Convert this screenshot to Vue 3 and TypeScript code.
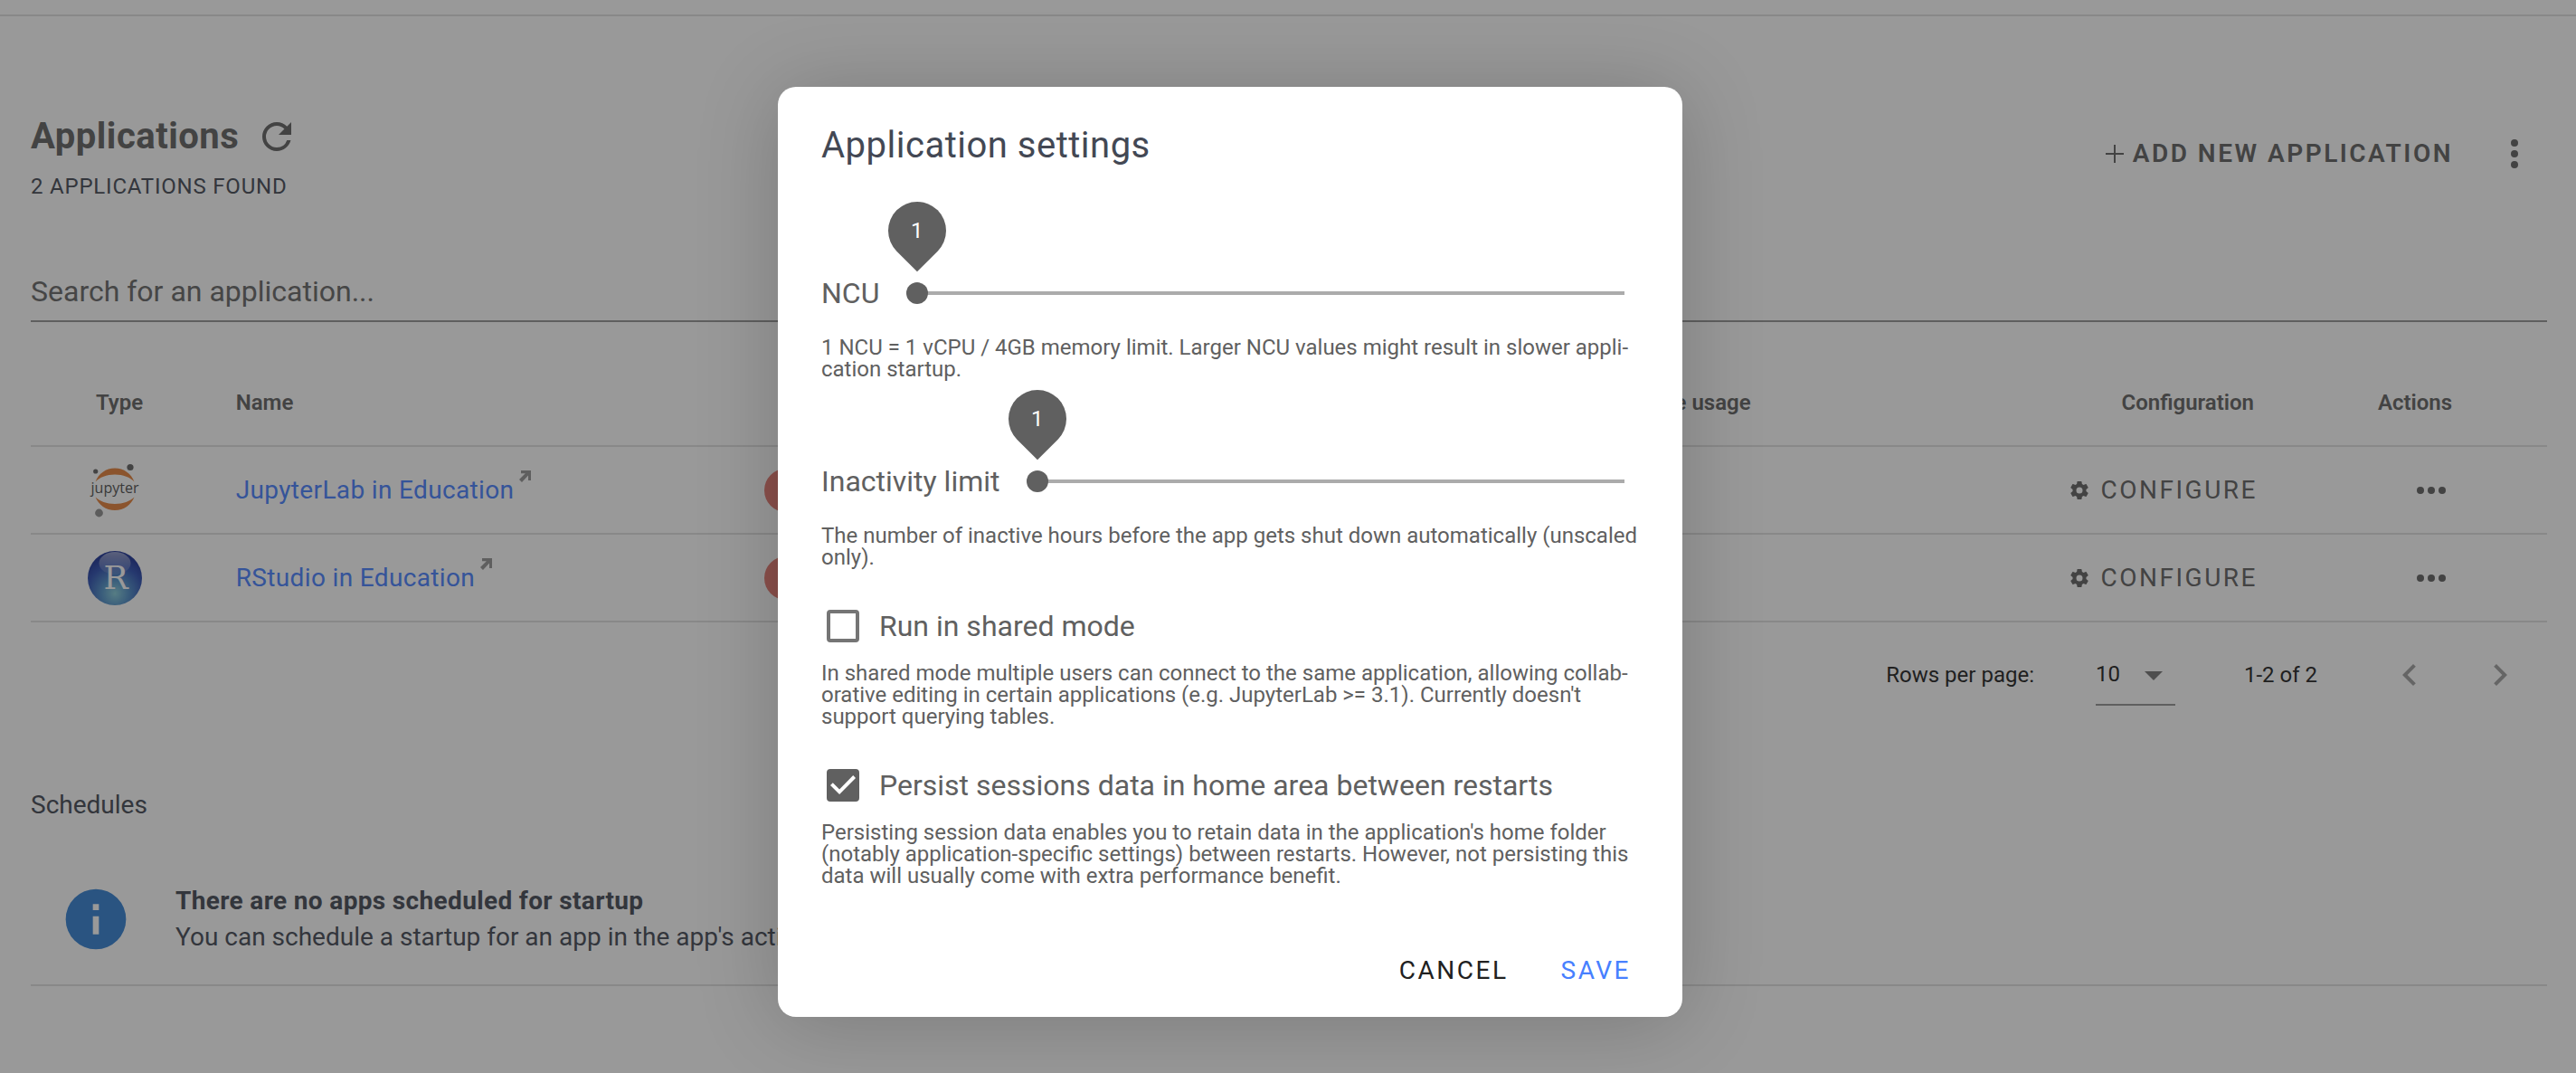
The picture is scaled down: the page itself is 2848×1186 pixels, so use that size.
<script setup lang="ts">
import { ref } from 'vue'

interface AppRow {
  id: number
  kind: 'jupyter' | 'rstudio'
  name: string
}

const apps: AppRow[] = [
  { id: 1, kind: 'jupyter', name: 'JupyterLab in Education' },
  { id: 2, kind: 'rstudio', name: 'RStudio in Education' },
]

const search = ref('')
const rowsPerPage = ref('10')
const ncu = ref(1)
const inactivity = ref(1)
const sharedMode = ref(false)
const persist = ref(true)
</script>

<template>
  <div class="app">
    <div class="topbar"></div>
    <main class="page">
      <header class="head">
        <div>
          <div class="title-row">
            <h1>Applications</h1>
            <button class="icon-btn" aria-label="Refresh">
              <svg width="48" height="48" viewBox="0 0 24 24" fill="currentColor"><path d="M17.65 6.35C16.2 4.9 14.21 4 12 4a8 8 0 0 0-8 8 8 8 0 0 0 8 8c3.73 0 6.84-2.55 7.73-6h-2.08A5.99 5.99 0 0 1 12 18a6 6 0 0 1-6-6 6 6 0 0 1 6-6c1.66 0 3.14.69 4.22 1.78L13 11h7V4l-2.35 2.35z" /></svg>
            </button>
          </div>
          <p class="count">2 APPLICATIONS FOUND</p>
        </div>
        <div class="head-actions">
          <button class="add">
            <svg width="20" height="20" viewBox="0 0 20 20" fill="none" stroke="currentColor" stroke-width="2"><path d="M10 0v20M0 10h20" /></svg>
            <span>ADD NEW APPLICATION</span>
          </button>
          <button class="icon-btn" aria-label="More">
            <svg width="48" height="48" viewBox="0 0 24 24" fill="currentColor"><circle cx="12" cy="6" r="2" /><circle cx="12" cy="12" r="2" /><circle cx="12" cy="18" r="2" /></svg>
          </button>
        </div>
      </header>

      <input v-model="search" class="search" type="text" placeholder="Search for an application..." aria-label="Search for an application" />

      <table class="apps">
        <colgroup>
          <col class="c-type" /><col class="c-name" /><col class="c-status" /><col class="c-usage" /><col class="c-config" /><col class="c-actions" />
        </colgroup>
        <thead>
          <tr>
            <th class="type">Type</th>
            <th>Name</th>
            <th class="mid">Status</th>
            <th class="end">Resource usage</th>
            <th class="end">Configuration</th>
            <th class="mid">Actions</th>
          </tr>
        </thead>
        <tbody>
          <tr v-for="a in apps" :key="a.id">
            <td class="logo">
              <svg v-if="a.kind === 'jupyter'" width="60" height="60" viewBox="0 0 60 60">
                <path d="M8.500 20.500C12 11.500 20 5.500 30 5.500s18 6 21.500 15C47 15.500 39 12.500 30 12.500S13 15.500 8.500 20.500z" fill="#e58038" />
                <path d="M8.500 37.500C12 46 20 52 30 52s18-6 21.500-14.500C47 42 39 45 30 45S13 42 8.500 37.500z" fill="#e58038" />
                <circle cx="47" cy="4.500" r="3.600" fill="#616161" />
                <circle cx="8.700" cy="9" r="2.600" fill="#616161" />
                <circle cx="12.500" cy="55" r="4.400" fill="#8f8f8f" />
                <text x="30" y="33" text-anchor="middle" class="jup">jupyter</text>
              </svg>
              <svg v-else width="60" height="60" viewBox="0 0 60 60">
                <defs>
                  <radialGradient id="ball" cx="0.5" cy="0.78" r="0.7">
                    <stop offset="0" stop-color="#84cbd8" />
                    <stop offset="0.35" stop-color="#4f90c8" />
                    <stop offset="0.75" stop-color="#2a4cb0" />
                    <stop offset="1" stop-color="#1b3296" />
                  </radialGradient>
                  <linearGradient id="gloss" x1="0" y1="0" x2="0" y2="1">
                    <stop offset="0" stop-color="#fff" stop-opacity="0.5" />
                    <stop offset="1" stop-color="#fff" stop-opacity="0.08" />
                  </linearGradient>
                </defs>
                <circle cx="30" cy="30" r="30" fill="url(#ball)" />
                <ellipse cx="30" cy="13.500" rx="17.500" ry="12.500" fill="url(#gloss)" />
                <text x="31" y="42" text-anchor="middle" class="rletter">R</text>
              </svg>
            </td>
            <td>
              <div class="name">
                <a href="#">{{ a.name }}</a>
                <svg width="13" height="13" viewBox="0 0 13 13" fill="currentColor"><path d="M2 0h11v11h-3V5.400L3 13 0 10 6.800 3.200H2z" /></svg>
              </div>
            </td>
            <td><span class="status"></span></td>
            <td></td>
            <td>
              <button class="configure">
                <svg width="24" height="24" viewBox="0 0 24 24" fill="currentColor"><path d="M12 15.500A3.500 3.500 0 0 1 8.500 12 3.500 3.500 0 0 1 12 8.500a3.500 3.500 0 0 1 3.500 3.500 3.500 3.500 0 0 1-3.500 3.500m7.430-2.530c.04-.32.07-.64.07-.97s-.03-.66-.07-1l2.110-1.630c.19-.15.24-.42.12-.64l-2-3.460c-.12-.22-.39-.31-.61-.22l-2.490 1c-.52-.39-1.060-.73-1.690-.98l-.37-2.650A.506.506 0 0 0 14 2h-4c-.25 0-.46.18-.5.42l-.37 2.650c-.63.25-1.170.59-1.690.98l-2.490-1c-.22-.09-.49 0-.61.22l-2 3.460c-.13.22-.07.49.12.64L4.570 11c-.04.34-.07.67-.07 1s.03.65.07.97l-2.110 1.660c-.19.15-.25.42-.12.64l2 3.460c.12.22.39.3.61.22l2.490-1.010c.52.4 1.060.74 1.690.99l.37 2.650c.04.24.25.42.5.42h4c.25 0 .46-.18.5-.42l.37-2.650c.63-.26 1.170-.59 1.690-.99l2.490 1.010c.22.08.49 0 .61-.22l2-3.460c.12-.22.07-.49-.12-.64z" /></svg>
                <span>CONFIGURE</span>
              </button>
            </td>
            <td class="actions">
              <button class="icon-btn" aria-label="Row actions">
                <svg width="48" height="48" viewBox="0 0 24 24" fill="currentColor"><circle cx="6" cy="12" r="2" /><circle cx="12" cy="12" r="2" /><circle cx="18" cy="12" r="2" /></svg>
              </button>
            </td>
          </tr>
        </tbody>
      </table>

      <div class="pager">
        <label for="rows">Rows per page:</label>
        <div class="select-wrap">
          <select id="rows" v-model="rowsPerPage">
            <option>10</option>
            <option>25</option>
          </select>
          <svg class="caret" width="20" height="10" viewBox="0 0 20 10" fill="currentColor"><path d="M0 0h20L10 10z" /></svg>
        </div>
        <span class="range">1-2 of 2</span>
        <button class="nav" aria-label="Previous page" disabled>
          <svg width="48" height="48" viewBox="0 0 24 24" fill="currentColor"><path d="M15.410 16.580L10.830 12l4.580-4.590L14 6l-6 6 6 6 1.410-1.420z" /></svg>
        </button>
        <button class="nav" aria-label="Next page" disabled>
          <svg width="48" height="48" viewBox="0 0 24 24" fill="currentColor"><path d="M8.590 16.580L13.170 12 8.590 7.410 10 6l6 6-6 6-1.410-1.420z" /></svg>
        </button>
      </div>

      <h2>Schedules</h2>
      <section class="notice">
        <svg width="80" height="80" viewBox="0 0 24 24" fill="currentColor"><path d="M13 9h-2V7h2m0 10h-2v-6h2m-1-9A10 10 0 0 0 2 12a10 10 0 0 0 10 10 10 10 0 0 0 10-10A10 10 0 0 0 12 2z" /></svg>
        <div>
          <strong>There are no apps scheduled for startup</strong>
          <p>You can schedule a startup for an app in the app's actions menu.</p>
        </div>
      </section>
    </main>

    <div class="scrim">
      <div class="dialog" role="dialog" aria-modal="true" aria-labelledby="dlg-title">
        <h2 id="dlg-title" class="dlg-title">Application settings</h2>

        <div class="slider-row first">
          <label for="ncu">NCU</label>
          <div class="slider">
            <input id="ncu" v-model.number="ncu" type="range" min="1" max="8" />
            <output for="ncu" class="bubble"><span>{{ ncu }}</span></output>
          </div>
        </div>
        <p class="hint after-slider">1 NCU = 1 vCPU / 4GB memory limit. Larger NCU values might result in slower appli-<br />cation startup.</p>

        <div class="slider-row">
          <label for="inactivity">Inactivity limit</label>
          <div class="slider">
            <input id="inactivity" v-model.number="inactivity" type="range" min="1" max="24" />
            <output for="inactivity" class="bubble"><span>{{ inactivity }}</span></output>
          </div>
        </div>
        <p class="hint after-slider">The number of inactive hours before the app gets shut down automatically (unscaled<br />only).</p>

        <label class="check">
          <input v-model="sharedMode" type="checkbox" />
          <span>Run in shared mode</span>
        </label>
        <p class="hint">In shared mode multiple users can connect to the same application, allowing collab-<br />orative editing in certain applications (e.g. JupyterLab &gt;= 3.1). Currently doesn't<br />support querying tables.</p>

        <label class="check">
          <input v-model="persist" type="checkbox" />
          <span>Persist sessions data in home area between restarts</span>
        </label>
        <p class="hint">Persisting session data enables you to retain data in the application's home folder<br />(notably application-specific settings) between restarts. However, not persisting this<br />data will usually come with extra performance benefit.</p>

        <div class="dlg-actions">
          <button class="cancel">CANCEL</button>
          <button class="save">SAVE</button>
        </div>
      </div>
    </div>
  </div>
</template>

<style>
body {
  background: #fff;
}
</style>

<style scoped>
.app {
  position: relative;
  min-height: 100vh;
  overflow: hidden;
  font-family: Roboto, "Liberation Sans", sans-serif;
  font-size: 28px;
  color: #434854;
  box-sizing: border-box;
}
.app *,
.app *::before {
  box-sizing: border-box;
}
h1,
h2,
p {
  margin: 0;
}
button {
  border: 0;
  padding: 0;
  background: none;
  color: inherit;
  font: inherit;
}
svg {
  display: block;
  flex: none;
}
.topbar {
  height: 18px;
  border-bottom: 2px solid #e0e0e0;
}
.page {
  padding: 108px 32px 96px 34px;
}
.head {
  display: flex;
  justify-content: space-between;
  align-items: flex-start;
}
.title-row {
  display: flex;
  gap: 18px;
  color: #606060;
}
h1 {
  font-size: 40px;
  line-height: 50px;
  font-weight: 700;
  letter-spacing: 0.0125em;
}
.count {
  margin-top: 14px;
  font-size: 24px;
  line-height: 32px;
  letter-spacing: 0.0333em;
}
.head-actions {
  display: flex;
  align-items: center;
  gap: 44px;
  padding: 20px 12px 0 0;
  color: #606060;
}
.add {
  display: flex;
  align-items: center;
  gap: 10px;
  font-weight: 600;
  line-height: 36px;
  letter-spacing: 0.0893em;
}
.search {
  display: block;
  width: 100%;
  height: 54px;
  margin-top: 80px;
  padding: 0 0 12px;
  border: 0;
  border-bottom: 2px solid #949494;
  border-radius: 0;
  background: none;
  font: 32px/40px Roboto, "Liberation Sans", sans-serif;
  outline: 0;
}
.search::placeholder {
  color: #666;
  opacity: 1;
}
.apps {
  width: 100%;
  margin-top: 42px;
  border-collapse: separate;
  border-spacing: 0;
  table-layout: fixed;
}
.c-type {
  width: 7%;
}
.c-name {
  width: 21%;
}
.c-status {
  width: 20%;
}
.c-config {
  width: 20%;
}
.c-actions {
  width: 256px;
}
th,
td {
  padding: 0 32px;
  border-bottom: 2px solid #e0e0e0;
  text-align: left;
}
th {
  height: 96px;
  font-size: 24px;
  font-weight: 600;
  color: #606060;
}
td {
  height: 97px;
}
th.type {
  padding-left: 72px;
}
th.end {
  padding-right: 68px;
  text-align: right;
}
th.mid {
  padding-right: 68px;
  text-align: center;
}
.logo {
  padding: 0 0 0 63px;
}
.jup {
  font: 16px "Open Sans", sans-serif;
  fill: #4e4e4e;
}
.rletter {
  font: 36px "DejaVu Serif", serif;
  fill: #fff;
}
.name {
  display: flex;
  align-items: flex-start;
  gap: 6px;
  color: #949494;
  line-height: 44px;
  letter-spacing: 0.0125em;
}
.name a {
  color: #4780ff;
  text-decoration: none;
}
.status {
  display: block;
  width: 48px;
  height: 48px;
  border-radius: 24px;
  background: #e5786f;
}
.configure {
  display: flex;
  align-items: center;
  gap: 12px;
  margin-left: auto;
  padding-right: 32px;
  color: #606060;
  letter-spacing: 0.0893em;
}
.actions .icon-btn {
  display: block;
  margin: 0 auto;
  color: #606060;
}
.pager {
  display: flex;
  align-items: center;
  justify-content: flex-end;
  height: 116px;
  padding-right: 28px;
  font-size: 24px;
  color: #212121;
}
.select-wrap {
  position: relative;
  width: 88px;
  height: 68px;
  margin: 0 76px 0 68px;
}
select {
  width: 100%;
  height: 100%;
  padding: 0;
  border: 0;
  border-bottom: 2px solid #949494;
  border-radius: 0;
  background: none;
  color: inherit;
  font: inherit;
  appearance: none;
}
.caret {
  position: absolute;
  right: 14px;
  top: 30px;
  color: #757575;
  pointer-events: none;
}
.nav {
  margin-left: 52px;
  color: #a0a0a0;
}
.range {
  margin-right: 26px;
}
h2 {
  margin-top: 68px;
  font-size: 28px;
  line-height: 36px;
  font-weight: 400;
}
.notice {
  display: flex;
  align-items: center;
  gap: 48px;
  margin-top: 68px;
  padding: 0 32px 32px;
  border-bottom: 2px solid #e0e0e0;
  line-height: 40px;
}
.notice strong {
  font-weight: 700;
  letter-spacing: 0.0125em;
}
.notice svg {
  color: #3280d2;
}
.scrim {
  position: absolute;
  inset: 0;
  padding: 96px 128px 0 0;
  background: rgba(33, 33, 33, 0.46);
}
.dialog {
  width: 1000px;
  margin: 0 auto;
  padding: 40px 48px 16px;
  border-radius: 20px;
  background: #fff;
  color: #606060;
  box-shadow: 0 6px 92px rgba(0, 0, 0, 0.2);
}
.dlg-title {
  margin: 0;
  font-size: 40px;
  line-height: 50px;
  letter-spacing: 0.0125em;
  color: #434854;
}
.slider-row {
  display: flex;
  align-items: center;
  gap: 30px;
  height: 48px;
  margin-top: 88px;
  font-size: 32px;
}
.slider-row.first {
  margin-top: 114px;
}
.slider {
  position: relative;
  flex: 1;
  margin-right: 4px;
}
.slider input {
  display: block;
  width: 100%;
  height: 24px;
  margin: 0;
  background: none;
  appearance: none;
}
.slider input::-webkit-slider-runnable-track {
  height: 24px;
  background: linear-gradient(#ababab, #ababab) center / calc(100% - 24px) 4px no-repeat;
}
.slider input::-webkit-slider-thumb {
  width: 24px;
  height: 24px;
  border-radius: 50%;
  background: #606060;
  appearance: none;
}
.bubble {
  position: absolute;
  left: -20px;
  bottom: 49px;
  display: flex;
  align-items: center;
  justify-content: center;
  width: 64px;
  height: 64px;
  border-radius: 50% 50% 0;
  background: #606060;
  color: #fff;
  font-size: 24px;
  transform: rotate(45deg);
}
.bubble span {
  transform: rotate(-45deg);
}
.hint {
  margin-top: 16px;
  font-size: 24px;
  line-height: 24px;
  white-space: nowrap;
}
.hint.after-slider {
  margin-top: 24px;
}
.check {
  display: flex;
  align-items: center;
  gap: 22px;
  height: 48px;
  margin-top: 40px;
  padding-left: 6px;
  font-size: 32px;
}
.check input {
  width: 36px;
  height: 36px;
  margin: 0;
  border: 4px solid #757575;
  border-radius: 4px;
  appearance: none;
}
.check input:checked {
  border-color: #606060;
  background: #606060;
}
.check input:checked::before {
  content: "";
  display: block;
  width: 28px;
  height: 28px;
  background: #fff;
  clip-path: polygon(0 50%, 10% 40%, 36% 66%, 90% 11%, 100% 21%, 36% 86%);
}
.dlg-actions {
  display: flex;
  justify-content: flex-end;
  margin: 56px -20px 0 0;
}
.dlg-actions button {
  height: 72px;
  padding: 0 29px;
  letter-spacing: 0.0893em;
}
.cancel {
  color: #212121;
}
.save {
  color: #4780ff;
}
</style>
